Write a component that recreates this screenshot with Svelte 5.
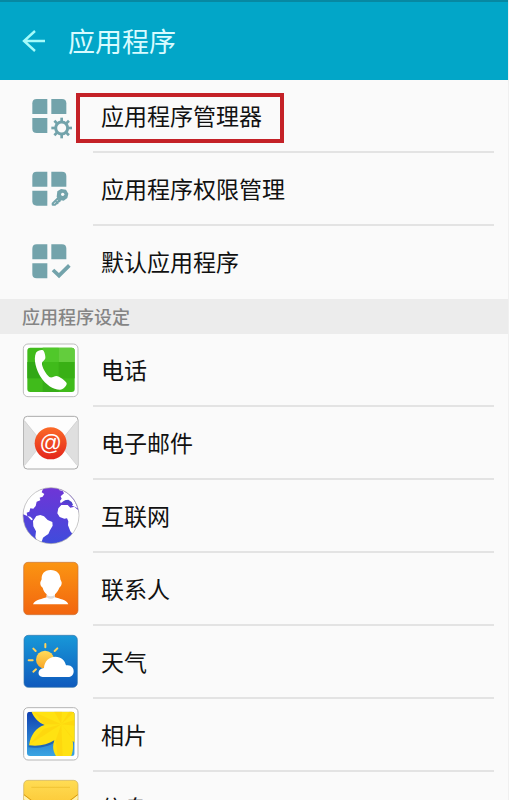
<script lang="ts">
  interface Entry {
    icon: string;
    label: string;
    box: string;
    marked?: boolean;
  }

  const general: Entry[] = [
    { icon: "manager", label: "应用程序管理器", box: "36 9 168 168", marked: true },
    { icon: "permission", label: "应用程序权限管理", box: "36 3 168 168" },
    { icon: "default", label: "默认应用程序", box: "36 222 168 168" },
  ];

  const apps: Entry[] = [
    { icon: "phone", label: "电话", box: "66 156 168 168" },
    { icon: "email", label: "电子邮件", box: "36 30 168 168" },
    { icon: "globe", label: "互联网", box: "36 24 168 168" },
    { icon: "contacts", label: "联系人", box: "36 33 168 168" },
    { icon: "weather", label: "天气", box: "36 27 168 168" },
    { icon: "photos", label: "相片", box: "36 21 168 168" },
    { icon: "messages", label: "信息", box: "36 240 168 168" },
  ];

  const teeth = [0, 45, 90, 135, 180, 225, 270, 315];
</script>

{#snippet tiles(y: number)}
  <g fill="#73a3ab">
    <path d="M80 {y}h32v45H67v-32q0-13 13-13z" />
    <path d="M124 {y}h32q13 0 13 13v32h-45z" />
    <path d="M67 {y + 57}h45v45H80q-13 0-13-13z" />
  </g>
{/snippet}

{#snippet glyph(icon: string)}
  {#if icon === "manager"}
    {@render tiles(42)}
    <circle cx="155" cy="129" r="18" fill="none" stroke="#73a3ab" stroke-width="9" />
    {#each teeth as angle}
      <path d="M151 98h8v13h-8z" fill="#73a3ab" transform="rotate({angle} 155 129)" />
    {/each}
  {:else if icon === "permission"}
    {@render tiles(35)}
    <g stroke-linecap="round" stroke-linejoin="round">
      <path d="M146 112l-18 18v4h7l18-17" fill="#fafafa" stroke="#73a3ab" stroke-width="6" />
      <path d="M138 125l5 5M144 119l5 5" stroke="#73a3ab" stroke-width="5" />
    </g>
    <path d="M142 94l11-7 15 2 7 12-3 13-11 8-12-2-9-9z" fill="#73a3ab" />
    <circle cx="158" cy="103" r="5" fill="#fafafa" />
  {:else if icon === "default"}
    {@render tiles(253)}
    <path d="M129 330l18 17 31-31" fill="none" stroke="#73a3ab" stroke-width="11" />
  {:else if icon === "phone"}
    <rect x="70" y="162" width="164" height="158" rx="14" fill="#fff" stroke="#bdbdbd" stroke-width="3" />
    <rect x="82" y="173" width="142" height="133" rx="9" fill="#40bb1b" />
    <path d="M82 216h46v49H82z" fill="#31a816" />
    <path d="M128 173h48v43h-48z" fill="#50c82a" />
    <path d="M176 173h39q9 0 9 9v34h-48z" fill="#63cd3d" />
    <path d="M176 216h48v49h-48z" fill="#39b015" />
    <path d="M128 265h48v41h-48z" fill="#37ad18" />
    <path
      d="M108 188c5-6 16-10 21-7 4 3 8 17 7 24-1 6-9 9-10 14-2 9 12 35 22 42 7 4 14-2 21-3 8 0 29 15 31 22 1 7-10 19-20 19-21 0-43-15-58-38-13-21-23-53-14-73z"
      fill="#fff"
    />
  {:else if icon === "email"}
    <rect x="41" y="34" width="163" height="158" rx="11" fill="#fdfdfd" stroke="#aaa" stroke-width="3" />
    <path d="M42 44l56 70-56 69z" fill="#dfdfdf" />
    <path d="M203 44l-56 70 56 69z" fill="#dfdfdf" />
    <path d="M44 48l54 66-54 67M201 48l-54 66 54 67" fill="none" stroke="#ccc" stroke-width="2" />
    <circle cx="122" cy="115" r="48" fill="url(#mail)" />
    <text x="122" y="134" text-anchor="middle" class="at">@</text>
  {:else if icon === "globe"}
    <circle cx="123" cy="107" r="84" fill="url(#sea)" />
    <g fill="#fff">
      <path d="M39 99C42 61 65 33 99 27l-4 10 8 5-5 8-9 3 2 8-11 4-3 13-7 8-9-1-3 10-8 3 2 10 9 2 8 8-5 3-11-12-13-6z" />
      <path d="M79 108l12-3 11 4 11 11 14 6 1 11-8 14-5 11-9 6-7 5-4 12-13-1-6-13 2-17-8-15-1-16z" />
      <path d="M154 75l-9 10-3 15 7 11 14 5 8-1 4 9-1 12 7 18 6 7 10-6c12-18 15-44 8-64l-12-11-12 3-8-8z" />
      <path d="M148 28c27 9 46 29 55 57l-16-8-11-12-15-2-9 7-2-7 5-7-3-7 10-9-4-7-11-3z" />
    </g>
    <path d="M160 68l4-7 11-2 10 7 4 8-4 3-10-7z" fill="#4d43ce" />
    <circle cx="123" cy="107" r="84" fill="none" stroke="#aaa" stroke-width="2" />
  {:else if icon === "contacts"}
    <rect x="41" y="37" width="163" height="157" rx="13" fill="url(#orange)" stroke="#c8743a" stroke-width="2" />
    <path
      d="M122 60c19 0 29 12 29 28l4 9c1 8-3 13-7 16-3 9-8 15-13 20v9c13 5 34 6 40 21H69c7-15 29-16 41-21v-9c-6-5-10-12-12-20-5-3-8-9-7-16l4-9c-1-15 7-28 27-28z"
      fill="#fff"
    />
    <path d="M110 134q12 9 25 0v8q-13 9-25 0z" fill="#ddd" />
  {:else if icon === "weather"}
    <rect x="42" y="31" width="160" height="156" rx="13" fill="url(#sky)" stroke="#3477ad" stroke-width="2" />
    <path
      d="M106 57v10M70 71l7 7M56 106h12M70 140l8-7M142 70l-8 8"
      stroke="#ffd35b"
      stroke-width="6"
      stroke-linecap="round"
    />
    <circle cx="105" cy="104" r="27" fill="url(#sun)" />
    <path d="M98 156c-18 0-16-27 4-27 1-19 14-34 34-34 18 0 29 12 32 26 15-3 24 8 23 19-1 10-8 16-17 16z" fill="#fff" />
  {:else if icon === "photos"}
    <rect x="41" y="23" width="163" height="157" rx="13" fill="#fff" stroke="#b5b5b5" stroke-width="3" />
    <clipPath id="frame"><rect x="51" y="35" width="143" height="133" rx="9" /></clipPath>
    <g clip-path="url(#frame)">
      <path d="M51 35h143v133H51z" fill="url(#blue)" />
      <path d="M55 142c2-33 29-62 68-65l14 48c-22 15-52 21-82 17z" fill="#144da0" opacity=".6" />
      <path
        d="M64 34h132v96c-3-2-5-5-8-8 3 17 1 33-5 48h-44c-11-17-12-32-6-49-20 13-46 19-76 15 4-29 21-55 47-61-17-6-32-20-40-41z"
        fill="#ffe212"
      />
      <path
        d="M154 73L72 36l30 37zM154 73L57 134l44-47zM154 73l4 97h-15l-6-49zM154 73l40 48-15-15zM154 73l41-14v18zM154 73l-22-39h24zM154 73l24-39h17z"
        fill="#fccb0b"
        opacity=".45"
      />
    </g>
  {:else if icon === "messages"}
    <rect x="41" y="241" width="163" height="157" rx="13" fill="url(#gold)" stroke="#c9ad62" stroke-width="2" />
    <path d="M64 262h116" stroke="#e9b928" stroke-width="2" />
    <path d="M42 286l58 44q22 14 45 0l58-44v12l-58 44q-23 14-45 0l-58-44z" fill="#fff2b0" />
    <path d="M42 284l58 44q22 14 45 0l58-44" fill="none" stroke="#d89a14" stroke-width="3" />
  {/if}
{/snippet}

{#snippet row(entry: Entry)}
  <li>
    <a class="row" href="#{entry.icon}">
      <svg class="icon" viewBox={entry.box} aria-hidden="true">
        {@render glyph(entry.icon)}
      </svg>
      <span class="body">
        <span class={entry.marked ? "label marked" : "label"}>{entry.label}</span>
      </span>
    </a>
  </li>
{/snippet}

<svg class="defs" aria-hidden="true">
  <defs>
    <linearGradient id="mail" x2="0" y2="1">
      <stop stop-color="#fb6a28" />
      <stop offset="1" stop-color="#e3261c" />
    </linearGradient>
    <linearGradient id="sea" x2="0" y2="1">
      <stop stop-color="#6f35d6" />
      <stop offset="1" stop-color="#3f4cdc" />
    </linearGradient>
    <linearGradient id="orange" x2="0" y2="1">
      <stop stop-color="#fb9512" />
      <stop offset="1" stop-color="#f2650f" />
    </linearGradient>
    <linearGradient id="sky" x2="0" y2="1">
      <stop stop-color="#1898d8" />
      <stop offset="1" stop-color="#0f5abd" />
    </linearGradient>
    <linearGradient id="sun" x2="0" y2="1">
      <stop stop-color="#ffdc5c" />
      <stop offset="1" stop-color="#f8a526" />
    </linearGradient>
    <linearGradient id="blue" x2="0" y2="1">
      <stop stop-color="#0f3fb0" />
      <stop offset="1" stop-color="#3aa5e2" />
    </linearGradient>
    <linearGradient id="gold" x2="0" y2="1">
      <stop stop-color="#ffdc54" />
      <stop offset="1" stop-color="#f8b416" />
    </linearGradient>
  </defs>
</svg>

<div class="screen">
  <header>
    <button class="back" type="button" aria-label="返回">
      <svg viewBox="0 0 24 24" aria-hidden="true">
        <path d="M13 2L2 12l11 10M2 12h21" />
      </svg>
    </button>
    <h1>应用程序</h1>
  </header>

  <main>
    <ul>
      {#each general as entry}
        {@render row(entry)}
      {/each}
    </ul>
    <h2>应用程序设定</h2>
    <ul>
      {#each apps as entry}
        {@render row(entry)}
      {/each}
    </ul>
  </main>
</div>

<style>
  :global(body) {
    margin: 0;
    background: #fafafa;
  }

  .defs {
    position: absolute;
    width: 0;
    height: 0;
  }

  .screen {
    display: flex;
    flex-direction: column;
    height: 100vh;
    box-sizing: border-box;
    border-right: 1px solid #f0f0f0;
    background: #fafafa;
    color: #111;
    font-family: Roboto, "Noto Sans CJK SC", sans-serif;
  }

  header {
    display: flex;
    flex: none;
    align-items: center;
    gap: 22px;
    height: 80px;
    padding: 0 22px;
    box-sizing: border-box;
    border-top: 2px solid #0788a2;
    background: #02a6c8;
  }

  .back {
    display: flex;
    padding: 0;
    border: 0;
    background: none;
    cursor: pointer;
  }

  .back svg {
    width: 24px;
    height: 24px;
    fill: none;
    stroke: #a5fbfa;
    stroke-width: 2.4;
  }

  h1 {
    margin: 0;
    padding-top: 3px;
    color: #d8fbff;
    font-size: 27px;
    font-weight: 400;
    line-height: 40px;
  }

  main {
    flex: 1;
    min-height: 0;
    overflow-y: auto;
    scrollbar-width: none;
  }

  h2 {
    margin: 0;
    padding: 2px 22px 0;
    background: #ececec;
    color: #858585;
    font-size: 18px;
    font-weight: 500;
    line-height: 33px;
  }

  ul {
    margin: 0;
    padding: 0;
    list-style: none;
  }

  .row {
    display: flex;
    gap: 15px;
    height: 73px;
    padding: 0 14px 0 22px;
    color: inherit;
    text-decoration: none;
  }

  .icon {
    flex: none;
    width: 56px;
    height: 56px;
    margin-top: 8px;
    overflow: visible;
  }

  .body {
    display: flex;
    flex: 1;
    align-items: center;
    padding: 4px 0 0 8px;
    border-bottom: 2px solid #e3e3e3;
  }

  li:last-child .body {
    border-bottom-color: transparent;
  }

  .label {
    position: relative;
    font-size: 23px;
    line-height: 33px;
  }

  .marked::after {
    content: "";
    position: absolute;
    inset: -8px -22px -9px -25px;
    border: 4px solid #c42127;
  }

  .at {
    fill: #fff;
    font-family: "Liberation Sans", sans-serif;
    font-size: 66px;
  }
</style>
